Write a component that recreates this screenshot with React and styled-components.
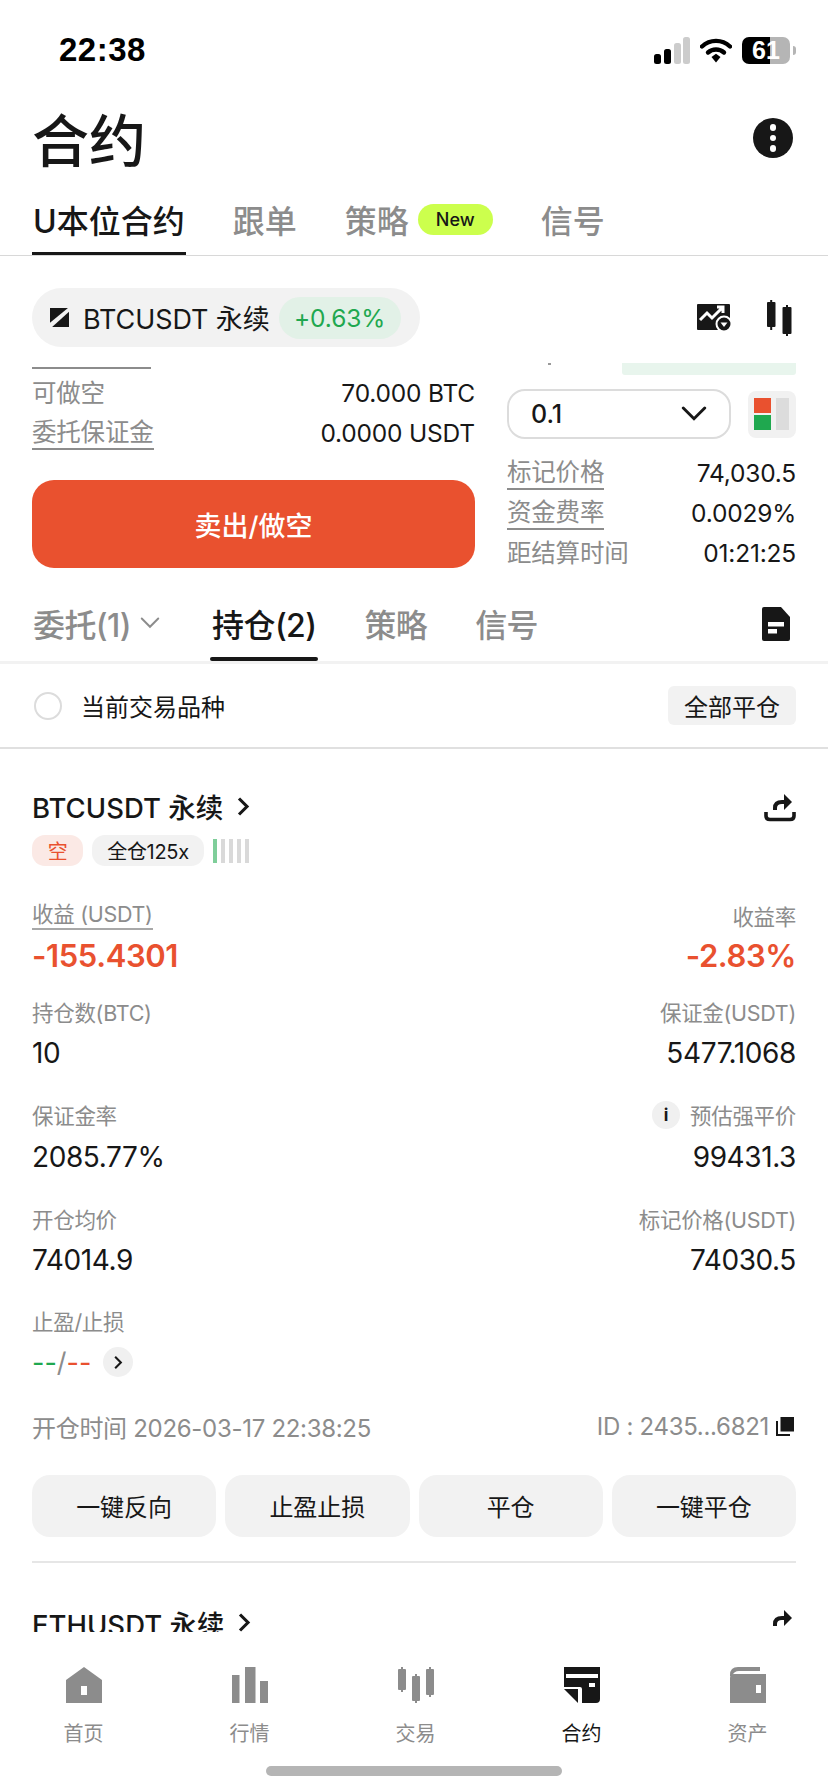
import React from "react";
import styled, { createGlobalStyle } from "styled-components";

const GlobalStyle = createGlobalStyle`
  html, body {
    margin: 0;
    padding: 0;
    background: #fff;
  }
  * {
    box-sizing: border-box;
  }
  body {
    font-family: Inter, "Noto Sans CJK SC", sans-serif;
    color: #171717;
  }
`;

const RED = "#e9512f";
const GREEN = "#1fa84f";
const GREY = "#8c8c8c";
const INK = "#171717";

const Page = styled.div`
  width: 828px;
  height: 1792px;
  display: flex;
  flex-direction: column;
  overflow: hidden;
  background: #fff;
`;

const StatusBar = styled.div`
  height: 100px;
  flex: none;
  display: flex;
  align-items: center;
  justify-content: space-between;
  padding: 0 32px 0 59px;
`;

const Time = styled.div`
  font-family: "Liberation Sans", sans-serif;
  font-size: 33px;
  font-weight: 700;
  letter-spacing: 0.5px;
  color: #000;
`;

const StatusIcons = styled.div`
  display: flex;
  align-items: center;
  gap: 10px;
`;

const Battery = styled.div`
  width: 48px;
  height: 27px;
  border-radius: 7px;
  overflow: hidden;
  position: relative;
  background: linear-gradient(90deg, #000 0 59%, #b5b5b5 59% 100%);
  color: #fff;
  font-family: "Liberation Sans", sans-serif;
  font-size: 25px;
  font-weight: 700;
  line-height: 27px;
  text-align: center;
`;

const BatteryCap = styled.div`
  width: 3px;
  height: 9px;
  margin-left: -7px;
  border-radius: 0 3px 3px 0;
  background: #b5b5b5;
`;

const TitleRow = styled.div`
  height: 80px;
  flex: none;
  display: flex;
  align-items: center;
  justify-content: space-between;
  padding: 0 35px 0 32px;
`;

const Title = styled.h1`
  margin: 4px 0 0;
  font-size: 57px;
  line-height: 76px;
  font-weight: 500;
  color: ${INK};
`;

const MoreButton = styled.div`
  width: 40px;
  height: 40px;
  border-radius: 50%;
  background: ${INK};
  display: flex;
  flex-direction: column;
  align-items: center;
  justify-content: center;
  gap: 4px;
  margin-bottom: 4px;
`;

const MoreDot = styled.span`
  width: 6.5px;
  height: 6.5px;
  border-radius: 50%;
  background: #fff;
`;

const TopTabs = styled.div`
  height: 76px;
  flex: none;
  display: flex;
  align-items: flex-start;
  gap: 46px;
  padding: 0 32px;
  border-bottom: 1px solid #d8d8d8;
`;

const TopTab = styled.div`
  position: relative;
  height: 75px;
  display: flex;
  align-items: center;
  gap: 9px;
  padding: 3px 1px 0;
  font-size: 32px;
  font-weight: 500;
  white-space: nowrap;
  color: ${(p) => (p.$active ? INK : GREY)};
  &::after {
    content: "";
    display: ${(p) => (p.$active ? "block" : "none")};
    position: absolute;
    left: 0;
    right: 0;
    bottom: 0;
    height: 3px;
    background: ${INK};
  }
`;

const NewBadge = styled.span`
  width: 75px;
  height: 31px;
  border-radius: 16px;
  background: #ccff4d;
  color: ${INK};
  display: flex;
  align-items: center;
  justify-content: center;
  font-size: 18px;
  font-weight: 500;
`;

const SymbolRow = styled.div`
  flex: none;
  display: flex;
  align-items: center;
  justify-content: space-between;
  padding: 32px 36px 0 32px;
`;

const SymbolPill = styled.div`
  width: 388px;
  height: 59px;
  border-radius: 30px;
  background: #f2f2f2;
  display: flex;
  align-items: center;
  padding: 0 0 0 18px;
  font-size: 27px;
  letter-spacing: -0.1px;
  color: ${INK};
`;

const SymbolName = styled.span`
  margin-left: 14px;
  white-space: nowrap;
`;

const ChangePill = styled.span`
  margin-left: 9px;
  width: 122px;
  height: 42px;
  border-radius: 21px;
  background: #e2f1e7;
  color: ${GREEN};
  font-size: 24.5px;
  display: flex;
  align-items: center;
  justify-content: center;
`;

const ToolIcons = styled.div`
  display: flex;
  align-items: center;
  gap: 35px;
`;

const FormClip = styled.div`
  flex: none;
  height: 222px;
  margin-top: 16px;
  padding: 0 32px;
  display: flex;
  justify-content: space-between;
`;

const FormLeft = styled.div`
  width: 443px;
  padding-top: 4px;
  display: flex;
  flex-direction: column;
`;

const ClippedRule = styled.div`
  width: 119px;
  height: 2px;
  background: ${GREY};
`;

const InfoRow = styled.div`
  height: ${(p) => p.$h || 40}px;
  display: flex;
  align-items: center;
  justify-content: space-between;
  font-size: 24.5px;
  letter-spacing: -0.2px;
  white-space: nowrap;
  color: ${INK};
`;

const InfoLabel = styled.span`
  color: ${GREY};
  line-height: 32px;
  border-bottom: ${(p) => (p.$dashed ? `2px solid ${GREY}` : "none")};
`;

const SellButton = styled.button`
  margin-top: 31px;
  height: 88px;
  flex: none;
  border: none;
  border-radius: 22px;
  background: ${RED};
  color: #fff;
  font-family: inherit;
  font-size: 27px;
  font-weight: 500;
`;

const FormRight = styled.div`
  width: 289px;
  display: flex;
  flex-direction: column;
`;

const DepthRow = styled.div`
  display: flex;
  justify-content: space-between;
  height: 12px;
`;

const DepthDot = styled.span`
  width: 3px;
  height: 2px;
  margin: 0 0 0 41px;
  background: #999;
`;

const DepthBar = styled.div`
  width: 174px;
  height: 12px;
  background: #e8f5ed;
  border-radius: 0 0 3px 3px;
`;

const SelectRow = styled.div`
  margin-top: 14px;
  display: flex;
  align-items: center;
  justify-content: space-between;
`;

const SizeSelect = styled.div`
  width: 224px;
  height: 50px;
  border: 2px solid #dcdcdc;
  border-radius: 18px;
  display: flex;
  align-items: center;
  justify-content: space-between;
  padding: 0 22px 0 22px;
  font-size: 25px;
  font-weight: 500;
`;

const LayoutToggle = styled.div`
  width: 48px;
  height: 47px;
  border-radius: 8px;
  background: #f1f1f1;
  display: flex;
  align-items: center;
  justify-content: center;
`;

const RightRows = styled.div`
  margin-top: 14px;
`;

const OrderTabs = styled.div`
  flex: none;
  margin-top: 0;
  height: 79px;
  display: flex;
  align-items: flex-start;
  padding: 0 32px 0 32px;
  border-bottom: 3px solid #f2f2f2;
`;

const OrderTab = styled.div`
  position: relative;
  height: 76px;
  display: flex;
  align-items: center;
  gap: 9px;
  padding: 0 1px;
  margin-right: ${(p) => p.$gap}px;
  font-size: 32px;
  font-weight: 500;
  letter-spacing: -0.6px;
  white-space: nowrap;
  color: ${(p) => (p.$active ? INK : GREY)};
  &::after {
    content: "";
    display: ${(p) => (p.$active ? "block" : "none")};
    position: absolute;
    left: -1px;
    right: -1px;
    bottom: 0;
    height: 4px;
    border-radius: 2px;
    background: ${INK};
  }
`;

const DocWrap = styled.div`
  margin: 22px 6px 0 auto;
`;

const FilterRow = styled.div`
  flex: none;
  height: 85px;
  display: flex;
  align-items: center;
  justify-content: space-between;
  padding: 0 32px 0 34px;
  border-bottom: 2px solid #e0e0e0;
`;

const FilterLabel = styled.label`
  display: flex;
  align-items: center;
  gap: 19px;
  font-size: 24px;
  color: ${INK};
`;

const Radio = styled.span`
  width: 28px;
  height: 28px;
  border-radius: 50%;
  border: 2px solid #dcdcdc;
`;

const SmallButton = styled.div`
  width: 128px;
  height: 39px;
  border-radius: 6px;
  background: #f2f2f2;
  display: flex;
  align-items: center;
  justify-content: center;
  font-size: 24px;
  color: ${INK};
`;

const Scroll = styled.div`
  flex: 1;
  min-height: 0;
  overflow: hidden;
  padding: 37px 32px 0;
`;

const PositionHead = styled.div`
  height: 40px;
  display: flex;
  align-items: center;
  justify-content: space-between;
`;

const PositionName = styled.div`
  display: flex;
  align-items: center;
  gap: 13px;
  font-size: 27.5px;
  font-weight: 500;
  white-space: nowrap;
  color: ${INK};
`;

const TagRow = styled.div`
  margin-top: 9px;
  display: flex;
  align-items: center;
  gap: 9px;
`;

const Tag = styled.span`
  height: 31px;
  width: ${(p) => p.$w}px;
  border-radius: 13px;
  background: ${(p) => (p.$short ? "#fbe9e5" : "#f2f2f2")};
  color: ${(p) => (p.$short ? RED : INK)};
  display: flex;
  align-items: center;
  justify-content: center;
  font-size: 20px;
  letter-spacing: -0.3px;
`;

const LeverBars = styled.div`
  display: flex;
  gap: 4px;
  height: 24px;
`;

const LeverBar = styled.span`
  width: 4px;
  background: ${(p) => (p.$on ? "#7fce9a" : "#d9d9d9")};
`;

const StatGrid = styled.div`
  margin-top: 31px;
  display: grid;
  grid-template-columns: 1fr 1fr;
`;

const Stat = styled.div`
  height: ${(p) => p.$h || 103.5}px;
  display: flex;
  flex-direction: column;
  align-items: ${(p) => (p.$right ? "flex-end" : "flex-start")};
`;

const StatLabel = styled.div`
  height: 36px;
  display: flex;
  align-items: center;
  gap: 10px;
  font-size: 21.5px;
  letter-spacing: -0.3px;
  color: ${GREY};
  white-space: nowrap;
`;

const UnderLabel = styled.span`
  line-height: 28px;
  border-bottom: 2px solid #a8a8a8;
`;

const StatValue = styled.div`
  height: 42px;
  margin-top: ${(p) => (p.$profit ? 1 : 3)}px;
  display: flex;
  align-items: center;
  font-size: ${(p) => (p.$profit ? 31 : 28)}px;
  font-weight: ${(p) => (p.$profit ? 600 : 400)};
  letter-spacing: -0.4px;
  color: ${(p) => (p.$profit ? RED : INK)};
`;

const InfoBadge = styled.span`
  width: 28px;
  height: 28px;
  border-radius: 50%;
  background: #f0f0f0;
  color: ${INK};
  font-size: 17px;
  font-weight: 700;
  display: flex;
  align-items: center;
  justify-content: center;
`;

const TpSl = styled.div`
  height: 42px;
  margin-top: 6px;
  display: flex;
  align-items: center;
  font-size: 27px;
  color: ${GREY};
`;

const TpText = styled.span`
  color: ${(p) => p.$color};
`;

const RoundChevron = styled.span`
  width: 30px;
  height: 30px;
  border-radius: 50%;
  background: #f0f0f0;
  margin-left: 12px;
  display: flex;
  align-items: center;
  justify-content: center;
`;

const MetaRow = styled.div`
  margin-top: 27px;
  height: 36px;
  display: flex;
  align-items: center;
  justify-content: space-between;
  font-size: 24px;
  letter-spacing: -0.3px;
  color: ${GREY};
  white-space: nowrap;
`;

const MetaId = styled.span`
  display: flex;
  align-items: center;
  gap: 7px;
  margin-right: 2px;
`;

const ActionRow = styled.div`
  margin-top: 30px;
  display: grid;
  grid-template-columns: repeat(4, 1fr);
  gap: 9px;
`;

const ActionButton = styled.div`
  height: 62px;
  border-radius: 18px;
  background: #f2f2f2;
  display: flex;
  align-items: center;
  justify-content: center;
  font-size: 24px;
  color: ${INK};
`;

const Divider = styled.div`
  margin-top: 24px;
  height: 2px;
  background: #e6e6e6;
`;

const NextHead = styled(PositionHead)`
  margin-top: 40px;
`;

const BottomNav = styled.div`
  flex: none;
  height: 160px;
  background: #fff;
  position: relative;
  display: grid;
  grid-template-columns: repeat(5, 166px);
  justify-content: center;
  padding: 35px 0 0 3px;
`;

const NavItem = styled.div`
  display: flex;
  flex-direction: column;
  align-items: center;
  height: 90px;
  gap: 15px;
  font-size: 20px;
  color: ${(p) => (p.$active ? INK : GREY)};
`;

const HomeIndicator = styled.div`
  position: absolute;
  left: 266px;
  bottom: 16px;
  width: 296px;
  height: 10px;
  border-radius: 5px;
  background: #b5b5b5;
`;

const Chevron = ({ size = 14, color = INK, width = 2.6 }) => (
  <svg width={size} height={size * 1.5} viewBox="0 0 14 21" fill="none">
    <path d="M3 2.5 11 10.5 3 18.5" stroke={color} strokeWidth={width * 1.2} />
  </svg>
);

const ChevronDown = ({ w = 26, color = INK, sw = 3 }) => (
  <svg width={w} height={w * 0.6} viewBox="0 0 26 16" fill="none">
    <path d="M2 2 13 13 24 2" stroke={color} strokeWidth={sw} strokeLinecap="round" />
  </svg>
);

const SignalIcon = () => (
  <svg width="36" height="27" viewBox="0 0 36 27">
    <rect x="0" y="17" width="7" height="10" rx="2.5" fill="#000" />
    <rect x="10" y="12" width="7" height="15" rx="2.5" fill="#000" />
    <rect x="20" y="6" width="7" height="21" rx="2.5" fill="#ccc" />
    <rect x="29" y="0" width="7" height="27" rx="2.5" fill="#ccc" />
  </svg>
);

const WifiIcon = () => (
  <svg width="32" height="27" viewBox="0 0 32 27" fill="none">
    <path d="M2 9.5C10 2 22 2 30 9.5" stroke="#000" strokeWidth="4.4" strokeLinecap="round" />
    <path d="M8 15.5C12.5 11.5 19.5 11.5 24 15.5" stroke="#000" strokeWidth="4.4" strokeLinecap="round" />
    <path d="M11.5 20 16 16.8 20.5 20 16 25.5Z" fill="#000" />
  </svg>
);

const LogoMark = () => (
  <svg width="19" height="19" viewBox="0 0 18 18">
    <path d="M0 0H17L0 14Z" fill={INK} />
    <path d="M18 3.5V18H2Z" fill={INK} />
  </svg>
);

const ChartAlertIcon = () => (
  <svg width="35" height="29" viewBox="0 0 35 29">
    <rect x="0" y="1" width="33" height="26" rx="1" fill={INK} />
    <path d="M3 17 10 10 15 15 25 5M20 4H26V10" fill="none" stroke="#fff" strokeWidth="3" />
    <circle cx="27" cy="21" r="7.5" fill={INK} stroke="#fff" strokeWidth="2" />
    <path d="M23.5 19.5H30.5L27 24Z" fill="#fff" />
  </svg>
);

const CandlesIcon = () => (
  <svg width="25" height="36" viewBox="0 0 25 36">
    <rect x="3.2" y="0" width="2" height="30" fill={INK} />
    <rect x="0" y="2" width="8.5" height="25" rx="1" fill={INK} />
    <rect x="19" y="5" width="2" height="31" fill={INK} />
    <rect x="15.5" y="7" width="9" height="27" rx="1" fill={INK} />
  </svg>
);

const LayoutIcon = () => (
  <svg width="36" height="32" viewBox="0 0 36 32">
    <rect x="22" y="0" width="13" height="32" fill="#dcdcdc" />
    <rect x="0" y="0" width="17" height="15" fill={RED} />
    <rect x="0" y="17" width="17" height="15" fill={GREEN} />
  </svg>
);

const DocIcon = () => (
  <svg width="28" height="34" viewBox="0 0 28 34">
    <path d="M2 0H19L28 10V32Q28 34 26 34H2Q0 34 0 32V2Q0 0 2 0Z" fill={INK} />
    <rect x="6" y="15" width="16" height="4.5" fill="#fff" />
    <rect x="6" y="22" width="9" height="4.5" fill="#fff" />
  </svg>
);

const ShareIcon = ({ tray = true }) => (
  <svg width="32" height="31" viewBox="0 0 32 31" fill="none">
    <path d="M11 19V17Q11 11 18 11H21" stroke={INK} strokeWidth="4" />
    <path d="M20 3 28 11 20 19Z" fill={INK} />
    {tray && <path d="M2 21V25Q2 28.5 6 28.5H26Q30 28.5 30 25V21" stroke={INK} strokeWidth="3.6" />}
  </svg>
);

const CopyIcon = () => (
  <svg width="18" height="19" viewBox="0 0 18 19">
    <rect x="4.5" y="0" width="13.5" height="14.5" fill={INK} />
    <path d="M1 4V18H14" fill="none" stroke={INK} strokeWidth="2" />
  </svg>
);

const HomeIcon = ({ c }) => (
  <svg width="36" height="36" viewBox="0 0 36 36">
    <path fillRule="evenodd" d="M18 0 36 13V36H0V13ZM15 19V28H21V19Z" fill={c} />
  </svg>
);

const MarketIcon = ({ c }) => (
  <svg width="36" height="36" viewBox="0 0 36 36">
    <rect x="0" y="8" width="7.5" height="28" fill={c} />
    <rect x="13" y="0" width="10.5" height="36" fill={c} />
    <rect x="28" y="14" width="8" height="22" fill={c} />
  </svg>
);

const TradeIcon = ({ c }) => (
  <svg width="36" height="36" viewBox="0 0 36 36">
    <rect x="3" y="0" width="2" height="25" fill={c} />
    <rect x="0" y="2" width="8" height="21" rx="1" fill={c} />
    <rect x="17" y="7" width="2" height="29" fill={c} />
    <rect x="14" y="9" width="8" height="25" rx="1" fill={c} />
    <rect x="31" y="0" width="2" height="30" fill={c} />
    <rect x="28" y="2" width="8" height="26" rx="1" fill={c} />
  </svg>
);

const ContractIcon = ({ c }) => (
  <svg width="36" height="36" viewBox="0 0 36 36">
    <path fillRule="evenodd" d="M0 0H36V32Q36 36 32 36H18V22Q18 20 16 20H0ZM2 7V11H34V7ZM25 16V20H31V16Z" fill={c} />
    <path d="M0 22H14V36Z" fill={c} />
  </svg>
);

const WalletIcon = ({ c }) => (
  <svg width="36" height="36" viewBox="0 0 36 36">
    <path fillRule="evenodd" d="M0 36V11Q0 7 4 7H36V36ZM26 18V26H31V18Z" fill={c} />
    <path d="M0 9V8Q0 0 8 0H30V4H9Q4 4 2 9Z" fill={c} />
  </svg>
);

const nav = [
  { label: "首页", Icon: HomeIcon },
  { label: "行情", Icon: MarketIcon },
  { label: "交易", Icon: TradeIcon },
  { label: "合约", Icon: ContractIcon, active: true },
  { label: "资产", Icon: WalletIcon },
];

const stats = [
  { left: "持仓数(BTC)", lv: "10", right: "保证金(USDT)", rv: "5477.1068" },
  { left: "保证金率", lv: "2085.77%", right: "预估强平价", rv: "99431.3", info: true },
  { left: "开仓均价", lv: "74014.9", right: "标记价格(USDT)", rv: "74030.5" },
];

export default function App() {
  return (
    <Page>
      <GlobalStyle />
      <StatusBar>
        <Time>22:38</Time>
        <StatusIcons>
          <SignalIcon />
          <WifiIcon />
          <Battery>61</Battery>
          <BatteryCap />
        </StatusIcons>
      </StatusBar>

      <TitleRow>
        <Title>合约</Title>
        <MoreButton>
          <MoreDot />
          <MoreDot />
          <MoreDot />
        </MoreButton>
      </TitleRow>

      <TopTabs>
        <TopTab $active>U本位合约</TopTab>
        <TopTab>跟单</TopTab>
        <TopTab>
          策略
          <NewBadge>New</NewBadge>
        </TopTab>
        <TopTab>信号</TopTab>
      </TopTabs>

      <SymbolRow>
        <SymbolPill>
          <LogoMark />
          <SymbolName>BTCUSDT 永续</SymbolName>
          <ChangePill>+0.63%</ChangePill>
        </SymbolPill>
        <ToolIcons>
          <ChartAlertIcon />
          <CandlesIcon />
        </ToolIcons>
      </SymbolRow>

      <FormClip>
        <FormLeft>
          <ClippedRule />
          <InfoRow $h={47}>
            <InfoLabel>可做空</InfoLabel>
            <span>70.000 BTC</span>
          </InfoRow>
          <InfoRow $h={33}>
            <InfoLabel $dashed>委托保证金</InfoLabel>
            <span>0.0000 USDT</span>
          </InfoRow>
          <SellButton>卖出/做空</SellButton>
        </FormLeft>
        <FormRight>
          <DepthRow>
            <DepthDot />
            <DepthBar />
          </DepthRow>
          <SelectRow>
            <SizeSelect>
              0.1
              <ChevronDown />
            </SizeSelect>
            <LayoutToggle>
              <LayoutIcon />
            </LayoutToggle>
          </SelectRow>
          <RightRows>
            <InfoRow>
              <InfoLabel $dashed>标记价格</InfoLabel>
              <span>74,030.5</span>
            </InfoRow>
            <InfoRow>
              <InfoLabel $dashed>资金费率</InfoLabel>
              <span>0.0029%</span>
            </InfoRow>
            <InfoRow>
              <InfoLabel>距结算时间</InfoLabel>
              <span>01:21:25</span>
            </InfoRow>
          </RightRows>
        </FormRight>
      </FormClip>

      <OrderTabs>
        <OrderTab $gap={50}>
          委托(1)
          <ChevronDown w={20} color={GREY} sw={2.6} />
        </OrderTab>
        <OrderTab $active $gap={46}>持仓(2)</OrderTab>
        <OrderTab $gap={46}>策略</OrderTab>
        <OrderTab $gap={0}>信号</OrderTab>
        <DocWrap>
          <DocIcon />
        </DocWrap>
      </OrderTabs>

      <FilterRow>
        <FilterLabel>
          <Radio />
          当前交易品种
        </FilterLabel>
        <SmallButton>全部平仓</SmallButton>
      </FilterRow>

      <Scroll>
        <PositionHead>
          <PositionName>
            BTCUSDT 永续
            <Chevron />
          </PositionName>
          <ShareIcon />
        </PositionHead>
        <TagRow>
          <Tag $short $w={51}>空</Tag>
          <Tag $w={112}>全仓125x</Tag>
          <LeverBars>
            <LeverBar $on />
            <LeverBar />
            <LeverBar />
            <LeverBar />
            <LeverBar />
          </LeverBars>
        </TagRow>

        <StatGrid>
          <Stat $h={96}>
            <StatLabel>
              <UnderLabel>收益 (USDT)</UnderLabel>
            </StatLabel>
            <StatValue $profit>-155.4301</StatValue>
          </Stat>
          <Stat $h={96} $right>
            <StatLabel>收益率</StatLabel>
            <StatValue $profit>-2.83%</StatValue>
          </Stat>
          {stats.map((s) => (
            <React.Fragment key={s.left}>
              <Stat>
                <StatLabel>{s.left}</StatLabel>
                <StatValue>{s.lv}</StatValue>
              </Stat>
              <Stat $right>
                <StatLabel>
                  {s.info && <InfoBadge>i</InfoBadge>}
                  {s.right}
                </StatLabel>
                <StatValue>{s.rv}</StatValue>
              </Stat>
            </React.Fragment>
          ))}
          <Stat $h={78}>
            <StatLabel>止盈/止损</StatLabel>
            <TpSl>
              <TpText $color={GREEN}>--</TpText>/<TpText $color={RED}>--</TpText>
              <RoundChevron>
                <Chevron size={10} width={2.4} />
              </RoundChevron>
            </TpSl>
          </Stat>
        </StatGrid>

        <MetaRow>
          <span>开仓时间 2026-03-17 22:38:25</span>
          <MetaId>
            ID : 2435...6821
            <CopyIcon />
          </MetaId>
        </MetaRow>

        <ActionRow>
          <ActionButton>一键反向</ActionButton>
          <ActionButton>止盈止损</ActionButton>
          <ActionButton>平仓</ActionButton>
          <ActionButton>一键平仓</ActionButton>
        </ActionRow>
        <Divider />

        <NextHead>
          <PositionName>
            ETHUSDT 永续
            <Chevron />
          </PositionName>
          <ShareIcon tray={false} />
        </NextHead>
      </Scroll>

      <BottomNav>
        {nav.map(({ label, Icon, active }) => (
          <NavItem key={label} $active={active}>
            <Icon c={active ? INK : GREY} />
            {label}
          </NavItem>
        ))}
        <HomeIndicator />
      </BottomNav>
    </Page>
  );
}
